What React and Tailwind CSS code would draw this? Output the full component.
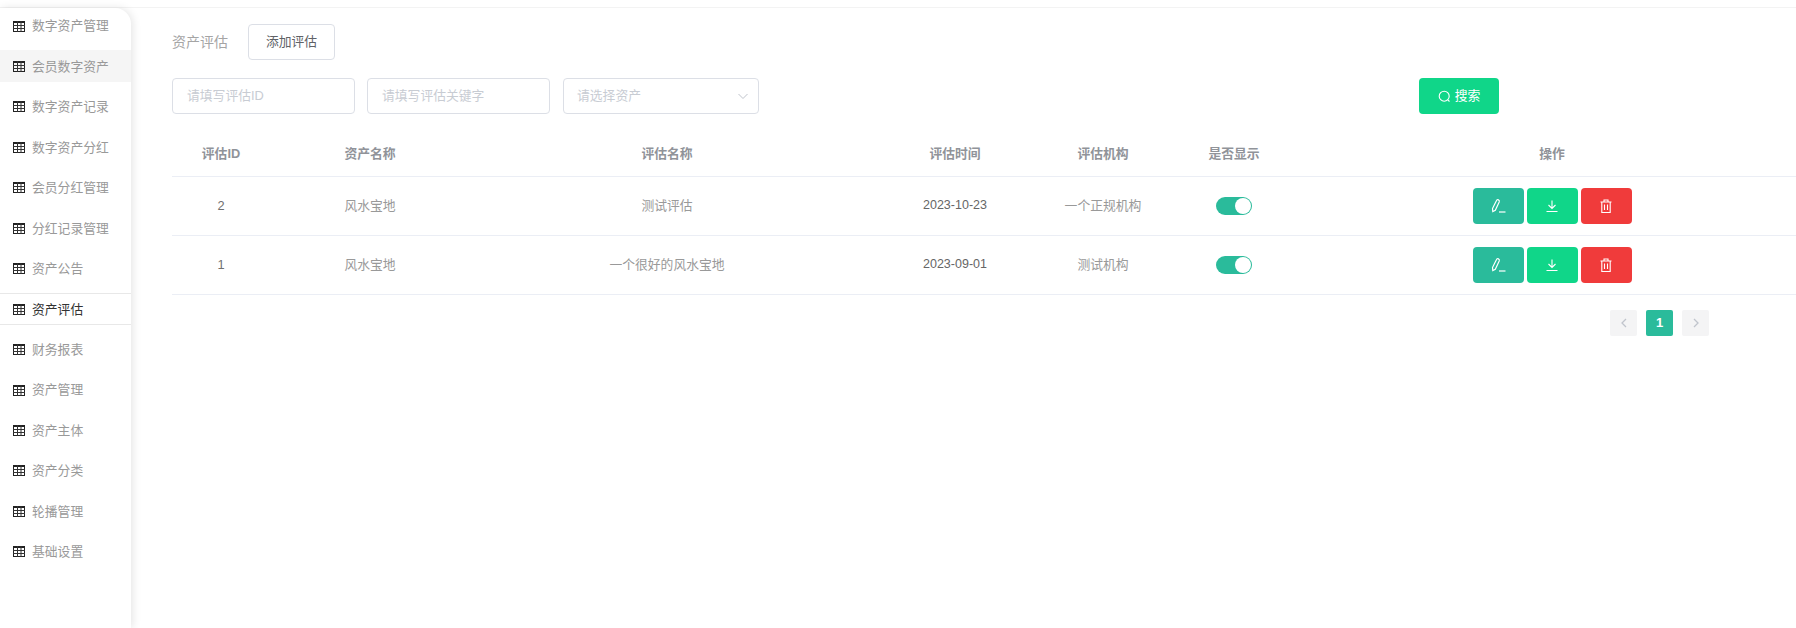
const FONT = "font-['Microsoft_YaHei','Liberation_Sans','Noto_Sans_CJK_SC',sans-serif]";

const MENU = ['数字资产管理', '会员数字资产', '数字资产记录', '数字资产分红', '会员分红管理', '分红记录管理', '资产公告', '资产评估', '财务报表', '资产管理', '资产主体', '资产分类', '轮播管理', '基础设置'];

const ROWS = [
  { id: 2, asset: '风水宝地', name: '测试评估', date: '2023-10-23', org: '一个正规机构' },
  { id: 1, asset: '风水宝地', name: '一个很好的风水宝地', date: '2023-09-01', org: '测试机构' },
];

function TableIcon() {
  return (
    <svg width="12" height="11" viewBox="0 0 12 11" className="shrink-0" fill="none">
      <rect x="0.5" y="0.5" width="11" height="10" stroke="#222" />
      <rect x="0" y="0" width="12" height="2" fill="#222" />
      <path d="M0 4.5h12M0 7.5h12M4.5 0v11M8 0v11" stroke="#333" strokeWidth="1" />
    </svg>
  );
}

function MenuItem({ label, index }) {
  const active = index === 7;
  const hover = index === 1;
  return (
    <div
      className={[
        'flex h-8 items-center gap-[7px] pl-[13px] text-[12.8px]',
        active ? 'border-y border-[#e8e8e8] text-[#333]' : 'text-[#999]',
        hover ? 'bg-[#f5f5f5]' : '',
      ].join(' ')}
    >
      <TableIcon />
      <span>{label}</span>
    </div>
  );
}

function Input({ placeholder, width }) {
  return (
    <div className={`flex h-[36px] items-center rounded-[4px] border border-[#dcdfe6] pl-[14px] pr-3 text-[12.8px] text-[#c8ccd3] ${width}`}>
      {placeholder}
    </div>
  );
}

function ActionButton({ color, children }) {
  return (
    <button className={`flex h-9 w-[51px] items-center justify-center rounded-[4px] text-white ${color}`}>
      {children}
    </button>
  );
}

function EditIcon() {
  return (
    <svg width="15" height="15" viewBox="0 0 15 15" fill="none" stroke="#fff" strokeWidth="1.2">
      <path d="M1.500 10.500 L1.800 13.600 L4.300 12.300 L8.200 4 C8.600 3 8.300 2.300 7.400 1.900 C6.500 1.500 5.800 1.800 5.400 2.700 Z" />
      <path d="M8 14h6.500" />
    </svg>
  );
}

function DownloadIcon() {
  return (
    <svg width="14" height="14" viewBox="0 0 14 14" fill="none" stroke="#fff" strokeWidth="1.1">
      <path d="M7 1.500v7.500M3.500 6l3.500 3.500L10.500 6M1.500 12.500h11" />
    </svg>
  );
}

function TrashIcon() {
  return (
    <svg width="14" height="14" viewBox="0 0 14 14" fill="none" stroke="#fff" strokeWidth="1.1">
      <path d="M1.500 3h11M5 3V1h4v2M2.800 3v10.500h8.400V3M5.500 5.500v5.500M8.500 5.500v5.500" />
    </svg>
  );
}

function Switch() {
  return (
    <div className="mx-auto flex h-[18px] w-9 items-center justify-end rounded-full bg-[#2abb9b] pr-px">
      <div className="h-4 w-4 rounded-full bg-white" />
    </div>
  );
}

export default function App() {
  return (
    <div className={`${FONT} flex min-h-[628px] flex-col bg-white`}>
      <div className="h-2 border-b border-[#f3f3f3]" />
      <div className="flex flex-1">
        <aside className="flex w-[131px] shrink-0 flex-col gap-[8.46px] rounded-tr-2xl pt-[2px] shadow-[2px_0_8px_rgba(0,0,0,0.1)]">
          {MENU.map((label, i) => (
            <MenuItem key={label} label={label} index={i} />
          ))}
        </aside>

        <main className="min-w-0 flex-1 pl-[41px] pt-4">
          <div className="flex h-9 items-center gap-5">
            <span className="text-[14px] text-[#a5a5a5]">资产评估</span>
            <button className="h-9 w-[87px] rounded-[4px] border border-[#dcdfe6] text-[12.8px] text-[#606266]">添加评估</button>
          </div>

          <div className="mt-[18px] flex items-center">
            <Input placeholder="请填写评估ID" width="w-[183px]" />
            <div className="w-3" />
            <Input placeholder="请填写评估关键字" width="w-[183px]" />
            <div className="w-[13px]" />
            <div className="flex h-[36px] w-[196px] items-center justify-between rounded-[4px] border border-[#dcdfe6] pl-[13px] pr-[9px] text-[12.8px] text-[#c8ccd3]">
              请选择资产
              <svg width="12" height="12" viewBox="0 0 12 12" fill="none" stroke="#c0c4cc" strokeWidth="1">
                <path d="M1.500 4l4.500 4.500L10.500 4" />
              </svg>
            </div>
            <button className="ml-[660px] flex h-9 w-[80px] items-center justify-center gap-1 rounded-[4px] bg-[#10d689] text-[12.8px] text-white">
              <svg width="13" height="13" viewBox="0 0 13 13" fill="none" stroke="#fff" strokeWidth="1.100">
                <circle cx="6.200" cy="6.200" r="5" />
                <path d="M9.800 9.800l1.700 1.700" />
              </svg>
              搜索
            </button>
          </div>

          <table className="mt-[18px] w-full table-fixed border-collapse text-center text-[12.8px]">
            <thead>
              <tr className="h-[44px] border-b border-[#ebeef5] text-[#909399]">
                <th className="w-[98px] font-semibold">评估ID</th>
                <th className="w-[200px] font-semibold">资产名称</th>
                <th className="w-[394px] font-semibold">评估名称</th>
                <th className="w-[182px] font-semibold">评估时间</th>
                <th className="w-[114px] font-semibold">评估机构</th>
                <th className="w-[148px] font-semibold">是否显示</th>
                <th className="font-semibold">操作</th>
              </tr>
            </thead>
            <tbody>
              {ROWS.map((row) => (
                <tr key={row.id} className="h-[59px] border-b border-[#ebeef5] text-[#999]">
                  <td className="text-[#707070]">{row.id}</td>
                  <td>{row.asset}</td>
                  <td>{row.name}</td>
                  <td className="text-[12.5px] font-normal text-[#666]">{row.date}</td>
                  <td>{row.org}</td>
                  <td><Switch /></td>
                  <td>
                    <div className="flex justify-center gap-[3px]">
                      <ActionButton color="bg-[#2abb9b]"><EditIcon /></ActionButton>
                      <ActionButton color="bg-[#10d689]"><DownloadIcon /></ActionButton>
                      <ActionButton color="bg-[#f03b3b]"><TrashIcon /></ActionButton>
                    </div>
                  </td>
                </tr>
              ))}
            </tbody>
          </table>

          <div className="mt-[15px] flex justify-end gap-[9px] pr-[87px]">
            <div className="flex h-[26px] w-[27px] items-center justify-center rounded-[2px] bg-[#f4f4f5]">
              <svg width="8" height="10" viewBox="0 0 8 10" fill="none" stroke="#c0c4cc" strokeWidth="1.300"><path d="M6 1L2 5l4 4" /></svg>
            </div>
            <div className="flex h-[26px] w-[27px] items-center justify-center rounded-[2px] bg-[#2abb9b] text-[13px] font-bold text-white">1</div>
            <div className="flex h-[26px] w-[27px] items-center justify-center rounded-[2px] bg-[#f4f4f5]">
              <svg width="8" height="10" viewBox="0 0 8 10" fill="none" stroke="#c0c4cc" strokeWidth="1.300"><path d="M2 1l4 4-4 4" /></svg>
            </div>
          </div>
        </main>
      </div>
    </div>
  );
}
